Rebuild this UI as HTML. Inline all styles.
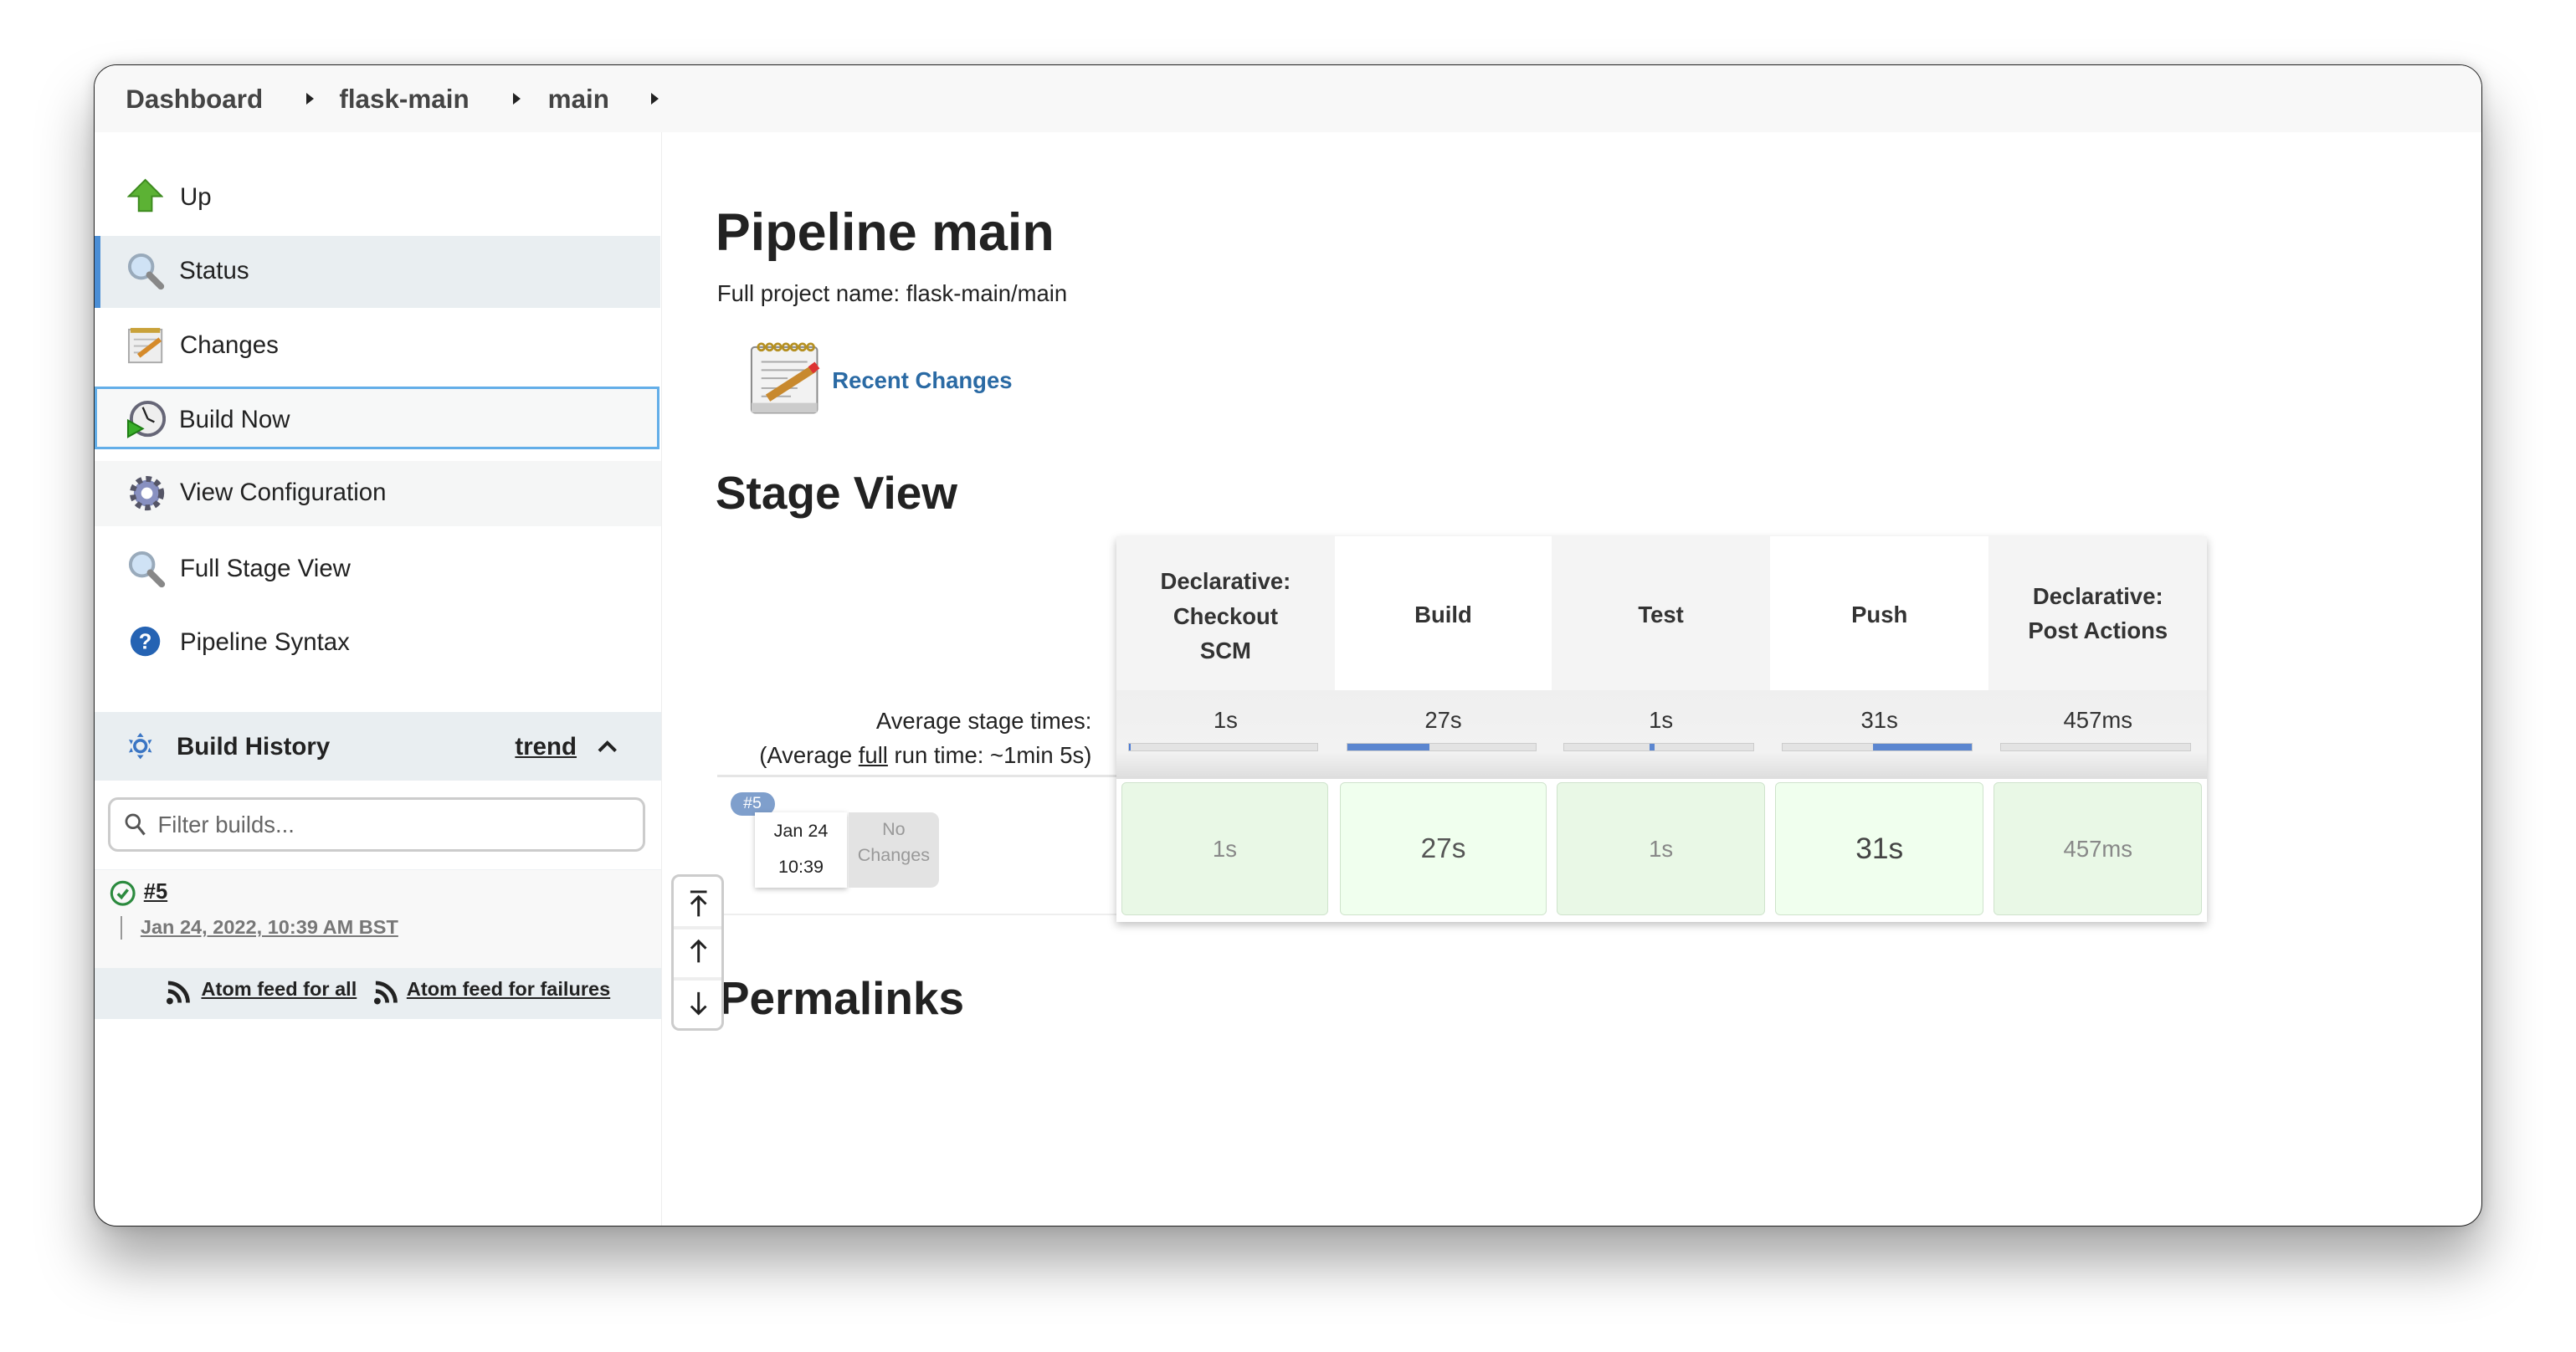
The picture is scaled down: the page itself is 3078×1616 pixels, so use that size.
<!DOCTYPE html>
<html><head><meta charset="utf-8"><style>
html,body{margin:0;padding:0;width:3078px;height:1616px;overflow:hidden;background:#fff}
#s{zoom:1.963;width:1568px;height:823px;position:relative;font-family:"Liberation Sans",Arial,sans-serif;color:#333;background:#fff}
.a{position:absolute}
.win{left:57px;top:39px;width:1453px;height:707px;border:1px solid #222;border-radius:14px;overflow:hidden;background:#fff;box-shadow:0 22px 34px rgba(0,0,0,.35),0 0 8px rgba(0,0,0,.15)}
.bc{left:0;top:0;width:1453px;height:41px;background:#f8f8f8;font-weight:bold;font-size:16px;color:#444}
.bc span{position:absolute;top:12px}
.tri{width:0;height:0;border-left:5px solid #222;border-top:4px solid transparent;border-bottom:4px solid transparent;top:17px!important}
.side{left:0;top:41px;width:345px;height:666px;border-right:1px solid #eee}
.it{position:absolute;left:0;width:345px;height:44px;font-size:15px;color:#222}
.it .t{position:absolute;left:52px;top:13px}
.it svg{position:absolute;left:20px;top:10px}
.cell{position:absolute;text-align:center}
</style></head><body><div id="s">
<div class="a win">
 <div class="a bc">
  <span style="left:19px">Dashboard</span><span class="tri" style="left:129px"></span>
  <span style="left:149px">flask-main</span><span class="tri" style="left:255px"></span>
  <span style="left:276px">main</span><span class="tri" style="left:339px"></span>
 </div>
 <div class="a side">
  <div class="it" style="top:18px"><svg width="22" height="22" viewBox="0 0 22 22"><path d="M11 1L21 11H15V20H7V11H1Z" fill="#5cb234" stroke="#3d8a1f"/></svg><span class="t">Up</span></div>
  <div class="it" style="top:63px;background:#e9eef1;border-left:4px solid #4a8ed6;width:341px"><svg width="24" height="24" viewBox="0 0 24 24" style="left:16px"><circle cx="9" cy="9" r="7" fill="#cfe2f5" stroke="#9ab" stroke-width="2"/><path d="M14 14L21 21" stroke="#888" stroke-width="4" stroke-linecap="round"/></svg><span class="t" style="left:48px">Status</span></div>
  <div class="it" style="top:108px"><svg width="24" height="24" viewBox="0 0 24 24"><rect x="1" y="2" width="20" height="20" fill="#eee" stroke="#aaa"/><rect x="2" y="1" width="18" height="3" fill="#c9a23a"/><path d="M4 8h14M4 12h10M4 16h8" stroke="#bbb"/><path d="M7 18L20 8" stroke="#d58a2a" stroke-width="3"/></svg><span class="t">Changes</span></div>
  <div class="it" style="top:155px;height:35px;border:2px solid #63aee8;background:#f7f8f8;width:341px;left:0"><svg width="24" height="24" viewBox="0 0 24 24" style="left:18px;top:6px"><circle cx="13" cy="12" r="10" fill="#eee" stroke="#667" stroke-width="2"/><path d="M13 12L10 5M13 12L17 14" stroke="#222" stroke-width="1.2"/><path d="M1 13L10 18L1 23Z" fill="#3aae2a" stroke="#1e7d14"/></svg><span class="t" style="left:50px;top:10px">Build Now</span></div>
  <div class="it" style="top:200px;height:40px;background:#f5f6f6"><svg width="24" height="24" viewBox="0 0 24 24" style="top:8px"><circle cx="12" cy="12" r="8" fill="#7f88b8" stroke="#556" stroke-width="5" stroke-dasharray="3 2.3"/><circle cx="12" cy="12" r="7" fill="#8890c0"/><circle cx="12" cy="12" r="3.5" fill="#fff"/></svg><span class="t" style="top:11px">View Configuration</span></div>
  <div class="it" style="top:244px"><svg width="24" height="24" viewBox="0 0 24 24"><circle cx="9" cy="9" r="7" fill="#cfe2f5" stroke="#9ab" stroke-width="2"/><path d="M14 14L21 21" stroke="#888" stroke-width="4" stroke-linecap="round"/></svg><span class="t">Full Stage View</span></div>
  <div class="it" style="top:289px"><svg width="22" height="22" viewBox="0 0 22 22"><circle cx="11" cy="11" r="9" fill="#2563b3"/><text x="11" y="15.5" text-anchor="middle" font-size="13" font-weight="bold" fill="#fff" font-family="Liberation Sans">?</text></svg><span class="t">Pipeline Syntax</span></div>
  <div class="a" style="left:0;top:353px;width:345px;height:42px;background:#e9eef1">
   <svg class="a" style="left:20px;top:13px" width="16" height="16" viewBox="0 0 16 16"><circle cx="8" cy="8" r="3.5" fill="none" stroke="#3a75c4" stroke-width="1.8"/><path d="M8 0L10 2.5H6ZM8 16L6 13.5H10ZM1 4L3.5 4.5 2.5 7ZM15 4L13.5 7 12.5 4.5ZM1 12L2.5 9 3.5 11.5ZM15 12L12.5 11.5 13.5 9Z" fill="#3a75c4"/></svg>
   <span class="a" style="left:50px;top:13px;font-weight:bold;font-size:15px;color:#222">Build History</span>
   <span class="a" style="left:256px;top:13px;font-weight:bold;font-size:15px;text-decoration:underline;color:#222">trend</span>
   <svg class="a" style="left:305px;top:15px" width="14" height="12" viewBox="0 0 14 12"><path d="M2 9L7 4 12 9" fill="none" stroke="#222" stroke-width="2"/></svg>
  </div>
  <div class="a" style="left:8px;top:405px;width:324px;height:30px;border:2px solid #ccc;border-radius:6px;background:#fff">
   <svg class="a" style="left:9px;top:8px" width="13" height="14" viewBox="0 0 13 14"><circle cx="5" cy="5" r="4" fill="none" stroke="#555" stroke-width="1.4"/><path d="M8 8L12 13" stroke="#555" stroke-width="1.6"/></svg>
   <span class="a" style="left:29px;top:7px;font-size:14px;color:#666">Filter builds...</span>
  </div>
  <div class="a" style="left:0;top:449px;width:345px;height:60px;background:#f8f8f8;border-top:1px solid #eef1f3">
   <svg class="a" style="left:9px;top:6px" width="16" height="16" viewBox="0 0 16 16"><circle cx="8" cy="8" r="6.8" fill="none" stroke="#2b8a3e" stroke-width="1.6"/><path d="M5 8.3L7.2 10.5 11 5.8" fill="none" stroke="#2b8a3e" stroke-width="1.8"/></svg>
   <span class="a" style="left:30px;top:6px;font-size:13px;font-weight:bold;text-decoration:underline;color:#222">#5</span>
   <div class="a" style="left:16px;top:28px;width:1px;height:14px;background:#999"></div>
   <span class="a" style="left:28px;top:28px;font-size:12px;font-weight:bold;text-decoration:underline;color:#777">Jan 24, 2022, 10:39 AM BST</span>
  </div>
  <div class="a" style="left:0;top:509px;width:345px;height:31px;background:#e9eef1;font-size:12px;font-weight:bold;color:#222">
   <svg class="a" style="left:43px;top:7px" width="16" height="16" viewBox="0 0 16 16"><circle cx="3" cy="13" r="2" fill="#222"/><path d="M2 7a7 7 0 0 1 7 7M2 2a12 12 0 0 1 12 12" fill="none" stroke="#222" stroke-width="2.4"/></svg>
   <span class="a" style="left:65px;top:6px;text-decoration:underline">Atom feed for all</span>
   <svg class="a" style="left:169px;top:7px" width="16" height="16" viewBox="0 0 16 16"><circle cx="3" cy="13" r="2" fill="#222"/><path d="M2 7a7 7 0 0 1 7 7M2 2a12 12 0 0 1 12 12" fill="none" stroke="#222" stroke-width="2.4"/></svg>
   <span class="a" style="left:190px;top:6px;text-decoration:underline">Atom feed for failures</span>
  </div>
 </div>
 <!-- main -->
 <div class="a" style="left:378px;top:84px;font-size:32px;font-weight:bold;color:#222">Pipeline main</div>
 <div class="a" style="left:379px;top:131px;font-size:14px;color:#222">Full project name: flask-main/main</div>
 <svg class="a" style="left:398px;top:168px" width="46" height="46" viewBox="0 0 46 46"><rect x="2" y="4" width="40" height="40" rx="2" fill="#f2f2f2" stroke="#888"/><rect x="2" y="38" width="40" height="6" fill="#ccc"/><g fill="none" stroke="#b59022" stroke-width="1.4"><circle cx="8" cy="4" r="2"/><circle cx="13" cy="4" r="2"/><circle cx="18" cy="4" r="2"/><circle cx="23" cy="4" r="2"/><circle cx="28" cy="4" r="2"/><circle cx="33" cy="4" r="2"/><circle cx="38" cy="4" r="2"/></g><path d="M8 13h28M8 18h28M8 23h16M8 29h22M8 34h18" stroke="#aaa"/><path d="M12 35L40 17" stroke="#c8892e" stroke-width="5"/><path d="M38 18L42 15" stroke="#d33" stroke-width="5"/></svg>
 <div class="a" style="left:449px;top:184px;font-size:14px;font-weight:bold;color:#2a6aa4">Recent Changes</div>
 <div class="a" style="left:378px;top:244px;font-size:28px;font-weight:bold;color:#222">Stage View</div>
 <div class="a" style="left:380px;top:389px;width:227px;text-align:right;font-size:14px;line-height:21px;color:#222">Average stage times:<br>(Average <u>full</u> run time: ~1min 5s)</div>
 <div class="a" style="left:379px;top:432px;width:243px;height:2px;background:#e5e5e5"></div>
 <div class="a" style="left:379px;top:517px;width:243px;height:1px;background:#eee"></div>
 <div class="a" style="left:387px;top:443px;width:27px;height:14px;border-radius:7px;background:#7f9fcc;color:#fff;font-size:10px;text-align:center;line-height:14px">#5</div>
 <div class="a" style="left:402px;top:455px;width:56px;height:46px;background:#fff;box-shadow:0 1px 3px rgba(0,0,0,.25);font-size:11px;text-align:center;line-height:22px;color:#222">Jan 24<br>10:39</div>
 <div class="a" style="left:459px;top:455px;width:55px;height:46px;background:#e3e3e3;border-radius:0 5px 5px 0;font-size:11px;text-align:center;line-height:16px;color:#999;padding-top:2px;box-sizing:border-box">No<br>Changes</div>
 <!-- stage table -->
 <div class="a" style="left:622px;top:287px;width:664px;height:235px;box-shadow:0 2px 5px rgba(0,0,0,.25);background:#fff">
  <div class="cell" style="left:0;top:0;width:133px;height:94px;background:#f4f4f4;font-weight:bold;font-size:14px;line-height:21px;padding-top:17px;box-sizing:border-box">Declarative:<br>Checkout<br>SCM</div>
  <div class="cell" style="left:133px;top:0;width:132px;height:94px;background:#fff;font-weight:bold;font-size:14px;padding-top:40px;box-sizing:border-box">Build</div>
  <div class="cell" style="left:265px;top:0;width:133px;height:94px;background:#f4f4f4;font-weight:bold;font-size:14px;padding-top:40px;box-sizing:border-box">Test</div>
  <div class="cell" style="left:398px;top:0;width:133px;height:94px;background:#fff;font-weight:bold;font-size:14px;padding-top:40px;box-sizing:border-box">Push</div>
  <div class="cell" style="left:531px;top:0;width:133px;height:94px;background:#f4f4f4;font-weight:bold;font-size:14px;line-height:21px;padding-top:26px;box-sizing:border-box">Declarative:<br>Post Actions</div>
  <div class="a" style="left:0;top:94px;width:664px;height:54px;background:linear-gradient(#efefef,#f2f2f2 70%,#ddd)"></div>
  <div class="cell" style="left:0;top:104px;width:133px;font-size:14px">1s</div>
  <div class="cell" style="left:133px;top:104px;width:132px;font-size:14px">27s</div>
  <div class="cell" style="left:265px;top:104px;width:133px;font-size:14px">1s</div>
  <div class="cell" style="left:398px;top:104px;width:133px;font-size:14px">31s</div>
  <div class="cell" style="left:531px;top:104px;width:133px;font-size:14px">457ms</div>
  <div class="a" style="left:7px;top:126px;width:115px;height:4px;background:#e3e3e3;border:1px solid #ccc"><div style="width:1px;height:4px;background:#4a7ad6"></div></div>
  <div class="a" style="left:140px;top:126px;width:115px;height:4px;background:#e3e3e3;border:1px solid #ccc"><div style="width:50px;height:4px;background:#5b86d0"></div></div>
  <div class="a" style="left:272px;top:126px;width:115px;height:4px;background:#e3e3e3;border:1px solid #ccc"><div style="margin-left:52px;width:3px;height:4px;background:#5b86d0"></div></div>
  <div class="a" style="left:405px;top:126px;width:115px;height:4px;background:#e3e3e3;border:1px solid #ccc"><div style="margin-left:55px;width:60px;height:4px;background:#5b86d0"></div></div>
  <div class="a" style="left:538px;top:126px;width:115px;height:4px;background:#e3e3e3;border:1px solid #ccc"></div>
  <div class="cell" style="left:3px;top:150px;width:125px;height:80px;background:#e9f8e6;border:1px solid #cfe3cc;border-radius:3px;font-size:14px;color:#888;line-height:80px">1s</div>
  <div class="cell" style="left:136px;top:150px;width:125px;height:80px;background:#f0ffee;border:1px solid #cfe3cc;border-radius:3px;font-size:17px;color:#555;line-height:80px">27s</div>
  <div class="cell" style="left:268px;top:150px;width:126px;height:80px;background:#e9f8e6;border:1px solid #cfe3cc;border-radius:3px;font-size:14px;color:#888;line-height:80px">1s</div>
  <div class="cell" style="left:401px;top:150px;width:126px;height:80px;background:#f0ffee;border:1px solid #cfe3cc;border-radius:3px;font-size:18px;color:#444;line-height:80px">31s</div>
  <div class="cell" style="left:534px;top:150px;width:126px;height:80px;background:#e9f8e6;border:1px solid #cfe3cc;border-radius:3px;font-size:14px;color:#888;line-height:80px">457ms</div>
 </div>
 <div class="a" style="left:380px;top:552px;font-size:28px;font-weight:bold;color:#222">Permalinks</div>
 <div class="a" style="left:351px;top:493px;width:29px;height:92px;border:2px solid #ccc;border-radius:5px;background:#fff">
  <svg class="a" style="left:7px;top:7px" width="16" height="18" viewBox="0 0 16 18"><path d="M3 2h10M8 17V5M3.5 9.5L8 5 12.5 9.5" fill="none" stroke="#222" stroke-width="1.5"/></svg>
  <div class="a" style="left:0;top:30px;width:29px;height:2px;background:#eee"></div>
  <svg class="a" style="left:7px;top:36px" width="16" height="18" viewBox="0 0 16 18"><path d="M8 16V3M3.5 7.5L8 3 12.5 7.5" fill="none" stroke="#222" stroke-width="1.5"/></svg>
  <div class="a" style="left:0;top:61px;width:29px;height:2px;background:#eee"></div>
  <svg class="a" style="left:7px;top:68px" width="16" height="18" viewBox="0 0 16 18"><path d="M8 2V15M3.5 10.5L8 15 12.5 10.5" fill="none" stroke="#222" stroke-width="1.5"/></svg>
 </div>
</div>
</div></body></html>
